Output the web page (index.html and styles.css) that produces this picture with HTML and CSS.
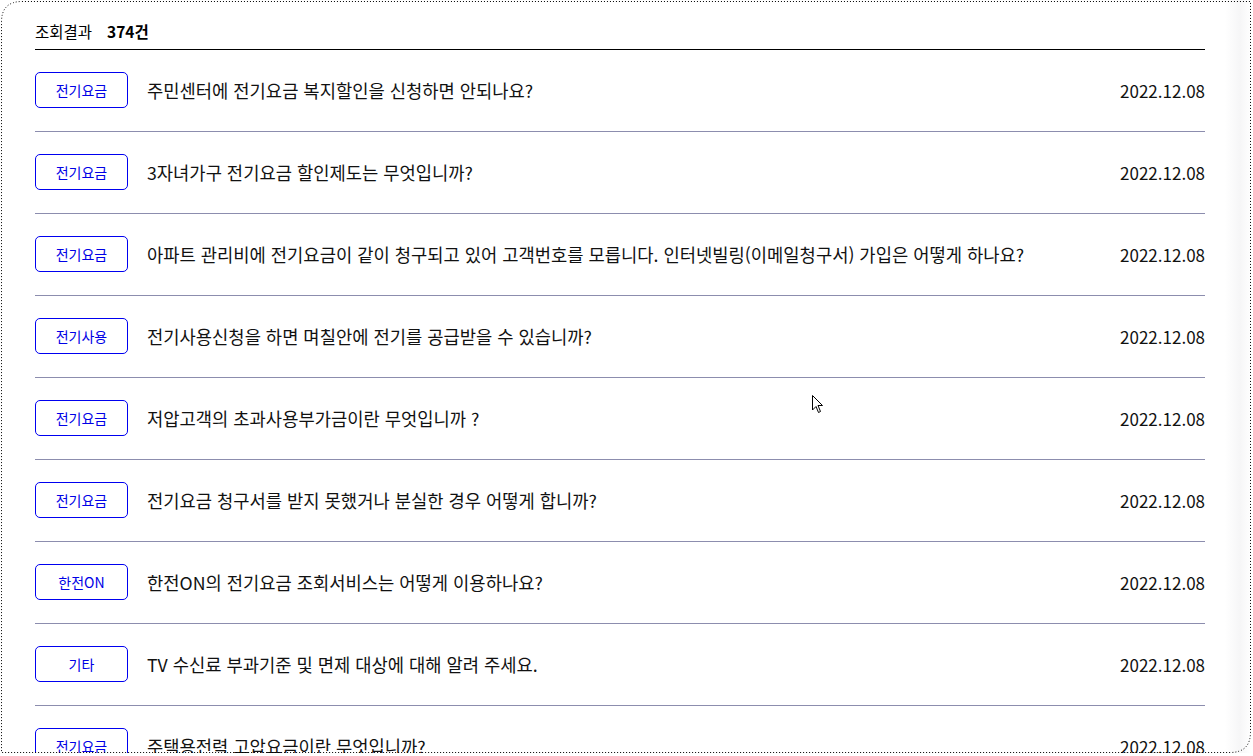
FILE: index.html
```html
<!DOCTYPE html>
<html lang="ko">
<head>
<meta charset="utf-8">
<title>조회결과</title>
<link rel="stylesheet" href="styles.css">
</head>
<body>
<div class="frame">
  <div class="board">
    <div class="result-head">
      <span class="label">조회결과</span>
      <strong class="count">374건</strong>
    </div>
    <ul class="list">
      <li class="row"><span class="badge">전기요금</span><span class="title">주민센터에 전기요금 복지할인을 신청하면 안되나요?</span><span class="date">2022.12.08</span></li>
      <li class="row"><span class="badge">전기요금</span><span class="title">3자녀가구 전기요금 할인제도는 무엇입니까?</span><span class="date">2022.12.08</span></li>
      <li class="row"><span class="badge">전기요금</span><span class="title">아파트 관리비에 전기요금이 같이 청구되고 있어 고객번호를 모릅니다. 인터넷빌링(이메일청구서) 가입은 어떻게 하나요?</span><span class="date">2022.12.08</span></li>
      <li class="row"><span class="badge">전기사용</span><span class="title">전기사용신청을 하면 며칠안에 전기를 공급받을 수 있습니까?</span><span class="date">2022.12.08</span></li>
      <li class="row"><span class="badge">전기요금</span><span class="title">저압고객의 초과사용부가금이란 무엇입니까 ?</span><span class="date">2022.12.08</span></li>
      <li class="row"><span class="badge">전기요금</span><span class="title">전기요금 청구서를 받지 못했거나 분실한 경우 어떻게 합니까?</span><span class="date">2022.12.08</span></li>
      <li class="row"><span class="badge">한전ON</span><span class="title">한전ON의 전기요금 조회서비스는 어떻게 이용하나요?</span><span class="date">2022.12.08</span></li>
      <li class="row"><span class="badge">기타</span><span class="title">TV 수신료 부과기준 및 면제 대상에 대해 알려 주세요.</span><span class="date">2022.12.08</span></li>
      <li class="row"><span class="badge">전기요금</span><span class="title">주택용전력 고압요금이란 무엇입니까?</span><span class="date">2022.12.08</span></li>
    </ul>
  </div>
  <svg class="outline" width="1253" height="756" viewBox="0 0 1253 756">
    <path d="M1.5 22 Q1.5 1.5 22 1.5 H1250.5 V732 Q1250.5 752.5 1230 752.5 H1.5 Z" fill="none" stroke="#000" stroke-width="1" stroke-dasharray="1 2"/>
  </svg>
  <svg class="cursor" width="12" height="20" viewBox="0 0 12 20">
    <path d="M0.5 0.5 V15 L4 11.5 L6.5 17.5 L8.5 16.5 L6 10.5 H10.5 Z" fill="#fff" stroke="#000" stroke-width="1" stroke-linejoin="miter"/>
  </svg>
</div>
</body>
</html>
```

FILE: styles.css
```css
html, body {
  margin: 0;
  padding: 0;
  background: #fff;
}

body {
  font-family: "Noto Sans CJK KR", "Noto Sans", sans-serif;
  color: #111;
  overflow: hidden;
}

.frame {
  position: relative;
  width: 1253px;
  height: 753px;
  overflow: hidden;
  background: linear-gradient(to right, #fff 0, #fff 1225px, #f6f6f7 1240px, #fff 1251px);
}

.board {
  padding: 0 48px 0 35px;
}

.result-head {
  box-sizing: border-box;
  height: 50px;
  padding-top: 21px;
  border-bottom: 1px solid #000;
  display: flex;
  align-items: flex-start;
  gap: 15px;
  line-height: 20px;
}

.label {
  font-size: 15.5px;
  color: #000;
}

.count {
  font-size: 15.5px;
  font-weight: 700;
  color: #000;
}

.list {
  list-style: none;
  margin: 0;
  padding: 0;
}

.row {
  box-sizing: border-box;
  height: 82px;
  padding-bottom: 1px;
  border-bottom: 1px solid #8c8dae;
  display: flex;
  align-items: center;
}

.badge {
  box-sizing: border-box;
  flex: 0 0 93px;
  height: 36px;
  margin-right: 19px;
  border: 1px solid #0000f0;
  border-radius: 5px;
  color: #0000e6;
  font-size: 14px;
  display: flex;
  align-items: center;
  justify-content: center;
}

.title {
  flex: 1;
  font-size: 17.7px;
  color: #111;
  white-space: nowrap;
}

.date {
  font-size: 17px;
  color: #111;
}

.outline {
  position: absolute;
  left: 0;
  top: 0;
  pointer-events: none;
}

.cursor {
  position: absolute;
  left: 812px;
  top: 395px;
}
```
